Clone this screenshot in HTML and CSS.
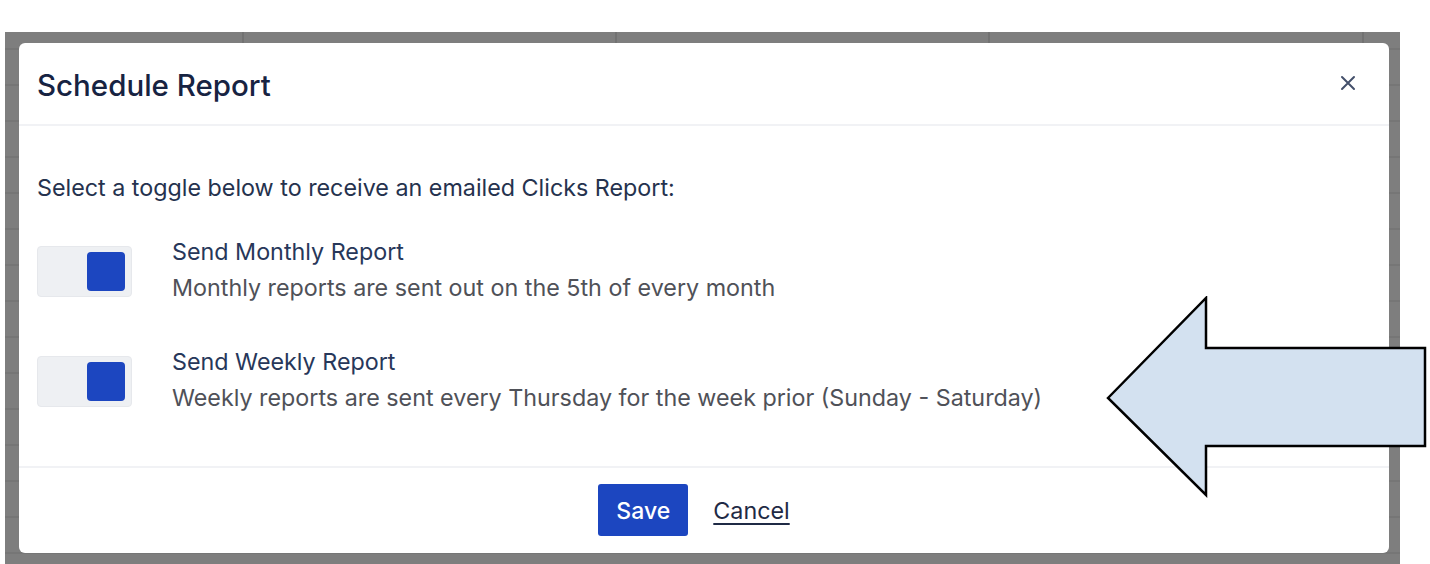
FILE: index.html
```html
<!DOCTYPE html>
<html lang="en">
<head>
<meta charset="utf-8">
<title>Schedule Report</title>
<link rel="stylesheet" href="styles.css">
</head>
<body>
<div class="screen">
  <div class="backdrop">
    <div class="modal">
      <div class="modal-header">
        <h1 class="modal-title">Schedule Report</h1>
        <button class="close-btn" aria-label="Close">
          <svg width="16" height="16" viewBox="0 0 16 16"><path d="M2 2 L14 14 M14 2 L2 14" stroke="#44506b" stroke-width="2" stroke-linecap="round" fill="none"/></svg>
        </button>
      </div>
      <div class="modal-body">
        <p class="intro">Select a toggle below to receive an emailed Clicks Report:</p>
        <div class="option">
          <span class="toggle"><span class="knob"></span></span>
          <div class="option-text">
            <div class="option-title">Send Monthly Report</div>
            <div class="option-desc">Monthly reports are sent out on the 5th of every month</div>
          </div>
        </div>
        <div class="option">
          <span class="toggle"><span class="knob"></span></span>
          <div class="option-text">
            <div class="option-title">Send Weekly Report</div>
            <div class="option-desc">Weekly reports are sent every Thursday for the week prior (Sunday - Saturday)</div>
          </div>
        </div>
      </div>
      <div class="modal-footer">
        <button class="btn-save">Save</button>
        <a class="btn-cancel" href="#">Cancel</a>
      </div>
    </div>
  </div>
  <svg class="arrow" width="324" height="204" viewBox="0 0 324 204">
    <polygon points="2,102 100,2 100,52 319,52 319,150 100,150 100,199" fill="#d3e1f0" stroke="#000" stroke-width="2.5" stroke-linejoin="miter"/>
  </svg>
</div>
</body>
</html>
```

FILE: styles.css
```css
* { box-sizing: border-box; }
html, body {
  margin: 0;
  padding: 0;
  background: #ffffff;
  width: 1430px;
  height: 564px;
  overflow: hidden;
  font-family: Inter, "Noto Sans", "Liberation Sans", sans-serif;
}
.screen {
  position: relative;
  width: 1430px;
  height: 564px;
  padding: 32px 0 0 5px;
}
.backdrop {
  width: 1395px;
  height: 532px;
  background-color: #7e7e7e;
  background-image:
    linear-gradient(to right, transparent 237px, #727272 237px, #727272 239px, transparent 239px, transparent 610px, #727272 610px, #727272 612px, transparent 612px, transparent 983px, #727272 983px, #727272 985px, transparent 985px, transparent 1357px, #727272 1357px, #727272 1359px, transparent 1359px),
    repeating-linear-gradient(to bottom, transparent 0, transparent 16px, #767676 16px, #767676 18px, transparent 18px, transparent 36px);
  background-size: 100% 11px, 100% 100%;
  background-repeat: no-repeat, repeat;
  padding: 11px 11px 0 14px;
}
.modal {
  width: 1370px;
  height: 510px;
  background: #ffffff;
  border-radius: 6px;
  display: flex;
  flex-direction: column;
}
.modal-header {
  height: 84px;
  border-bottom: 2px solid #f1f2f5;
  display: flex;
  align-items: center;
  justify-content: space-between;
  padding: 4px 33px 0 18px;
}
.modal-title {
  margin: 0;
  font-size: 29.5px;
  font-weight: 500;
  color: #172342;
  line-height: 36px;
}
.close-btn {
  border: 0;
  background: none;
  padding: 0;
  width: 16px;
  height: 16px;
  display: flex;
  margin-top: -4px;
}
.modal-body {
  flex: 1;
  padding: 48px 18px 0 18px;
  border-bottom: 2px solid #f1f2f5;
}
.intro {
  margin: 0 0 44px 0;
  font-size: 23.3px;
  color: #25324e;
  line-height: 28px;
}
.option {
  display: flex;
  align-items: flex-start;
  gap: 40px;
  height: 110px;
}
.toggle {
  width: 95px;
  height: 51px;
  background: #eef0f3;
  border: 1px solid #e6e8ec;
  border-radius: 4px;
  display: flex;
  justify-content: flex-end;
  align-items: center;
  padding-right: 6px;
}
.knob {
  width: 38px;
  height: 39px;
  background: #1c46c0;
  border-radius: 4px;
}
.option-text {
  display: flex;
  flex-direction: column;
  gap: 8px;
  margin-top: -8px;
}
.option-title {
  font-size: 23.3px;
  color: #27375a;
  line-height: 28px;
}
.option-desc {
  font-size: 23.3px;
  color: #4f5158;
  line-height: 28px;
}
.modal-footer {
  height: 87px;
  display: flex;
  align-items: center;
  justify-content: center;
  gap: 25px;
  padding-right: 20px;
}
.btn-save {
  width: 90px;
  height: 52px;
  background: #1c46c0;
  color: #ffffff;
  border: 0;
  border-radius: 3px;
  font-family: inherit;
  font-size: 23px;
  font-weight: 500;
  padding-top: 3px;
}
.btn-cancel {
  font-size: 23.3px;
  color: #1f2a45;
  text-decoration: underline;
  text-underline-offset: 4px;
  text-decoration-thickness: 1.5px;
}
.arrow {
  position: absolute;
  left: 1106px;
  top: 296px;
}
```
